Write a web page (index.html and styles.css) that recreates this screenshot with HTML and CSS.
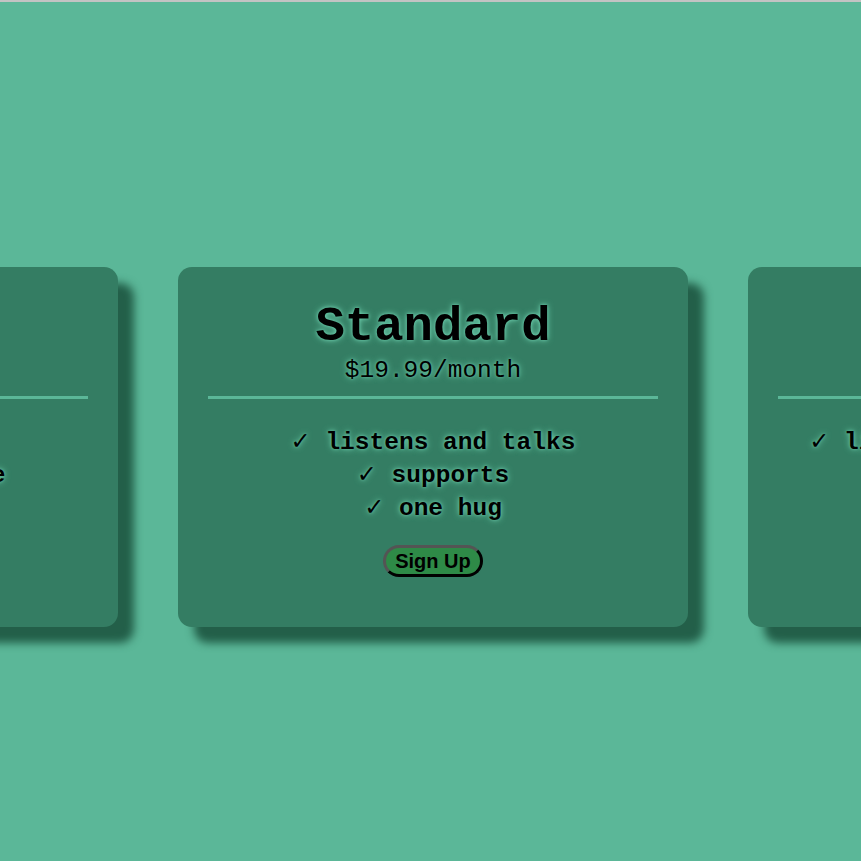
FILE: index.html
```html
<!DOCTYPE html>
<html lang="en">
<head>
<meta charset="utf-8">
<title>Pricing</title>
<link rel="stylesheet" href="styles.css">
</head>
<body>
<main class="row">
  <section class="card">
    <h2 class="title">Basic</h2>
    <p class="price">$9.99/month</p>
    <div class="divider"></div>
    <ul class="features">
      <li><span class="check">✓</span> listens</li>
      <li><span class="check">✓</span> hears your advice</li>
    </ul>
    <button class="btn">Sign Up</button>
  </section>
  <section class="card">
    <h2 class="title">Standard</h2>
    <p class="price">$19.99/month</p>
    <div class="divider"></div>
    <ul class="features">
      <li><span class="check">✓</span> listens and talks</li>
      <li><span class="check">✓</span> supports</li>
      <li><span class="check">✓</span> one hug</li>
    </ul>
    <button class="btn">Sign Up</button>
  </section>
  <section class="card">
    <h2 class="title">Premium</h2>
    <p class="price">$29.99/month</p>
    <div class="divider"></div>
    <ul class="features">
      <li><span class="check">✓</span> listens and talks always</li>
      <li><span class="check">✓</span> supports</li>
      <li><span class="check">✓</span> many hugs</li>
    </ul>
    <button class="btn">Sign Up</button>
  </section>
</main>
</body>
</html>
```
FILE: styles.css
```css
* { box-sizing: border-box; }
html, body { margin: 0; padding: 0; }
body {
  background: #5bb798;
  border-top: 2px solid #c3c3c3;
  height: 861px;
  overflow: hidden;
  font-family: "Liberation Mono", "DejaVu Sans Mono", monospace;
  color: #000;
}
.row {
  display: flex;
  justify-content: center;
  gap: 60px;
  padding-top: 265px;
  padding-left: 5px;
  width: 861px;
}
.card {
  flex: 0 0 510px;
  height: 360px;
  background: #347d63;
  border-radius: 14px;
  box-shadow: 16px 16px 8px #235f49;
  padding: 31px 30px 30px;
  text-align: center;
  text-shadow: 0 0 6px #72d6b4, 0 0 3px #5bb798;
}
.title {
  margin: 0;
  font-size: 49px;
  line-height: 58px;
  font-weight: bold;
}
.price {
  margin: 0;
  font-size: 24.5px;
  line-height: 30px;
  font-weight: normal;
}
.divider {
  height: 3px;
  background: #5bb798;
  margin: 10px 0 27px;
}
.features {
  list-style: none;
  margin: 0;
  padding: 0;
  font-size: 24.5px;
  line-height: 33px;
  font-weight: bold;
}
.features li {
  height: 33px;
}
.check {
  font-family: "DejaVu Sans", sans-serif;
  font-weight: bold;
  font-size: 24px;
  line-height: 1;
}
.btn {
  margin-top: 20px;
  font-family: "Liberation Sans", Arial, sans-serif;
  font-weight: bold;
  font-size: 20px;
  line-height: 24px;
  color: #000;
  background: #2e8a47;
  border: 3px outset #000;
  border-radius: 20px;
  padding: 1px 9px;
  text-shadow: none;
}
```
